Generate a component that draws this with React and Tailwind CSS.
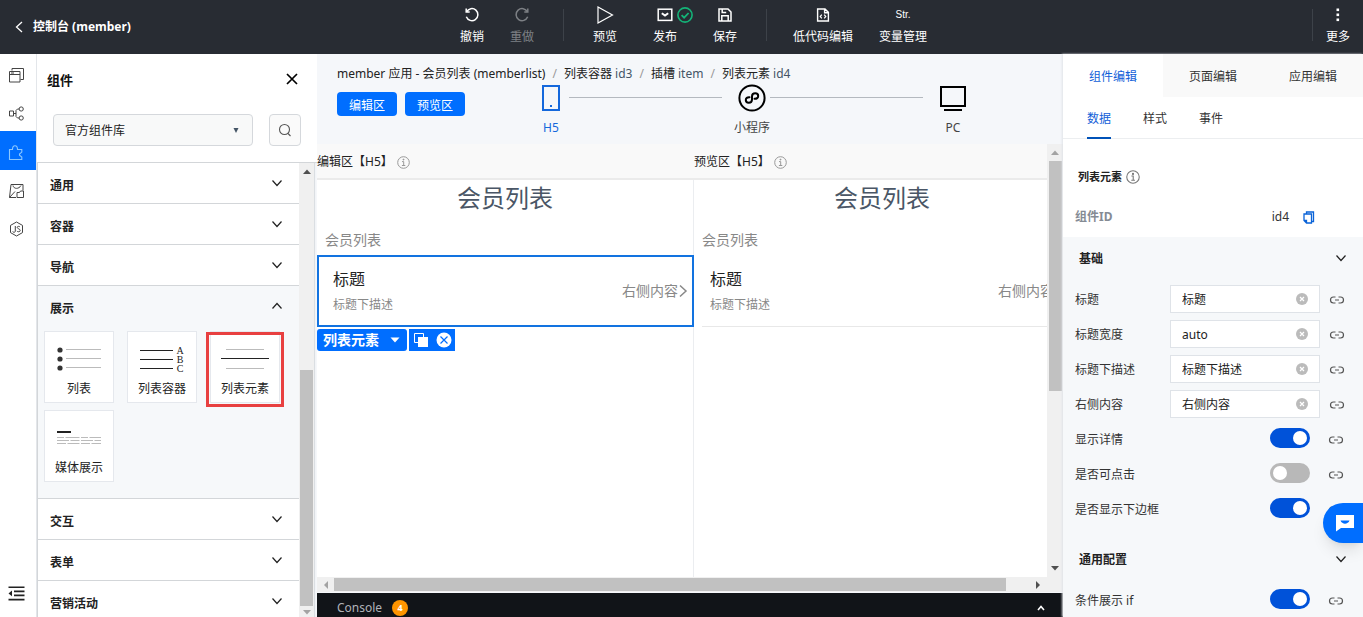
import React, { useState } from "react";

const SECTIONS_TOP = ["通用", "容器", "导航"];
const SECTIONS_BOTTOM = ["交互", "表单", "营销活动"];

const svgProps = { fill: "none", stroke: "currentColor", xmlns: "http://www.w3.org/2000/svg" };

// --- Icons ---
const Chevron = ({ up = false }) => (
  <svg {...svgProps} width="12" height="8" viewBox="0 0 12 8" strokeWidth="1.2">
    <path d={up ? "M1.5 6.5 L6 1.5 L10.5 6.5" : "M1.5 1.5 L6 6.5 L10.5 1.5"} />
  </svg>
);

const LinkIcon = () => (
  <svg {...svgProps} width="16" height="10" viewBox="0 0 16 10" strokeWidth="1.2">
    <path d="M6.5 2H4.5a3 3 0 0 0 0 6h2M9.5 2h2a3 3 0 0 1 0 6h-2M6 5h4" />
  </svg>
);

const InfoIcon = ({ size = 13 }) => (
  <svg {...svgProps} width={size} height={size} viewBox="0 0 13 13">
    <circle cx="6.5" cy="6.5" r="5.8" />
    <path d="M5 5.6h1.7v3.6M4.9 9.5h3.4" />
    <circle cx="6.5" cy="3.6" r="0.5" fill="currentColor" />
  </svg>
);

const Triangle = ({ dir }) => {
  const d = {
    up: "M0 6 L4 1.5 L8 6Z",
    down: "M0 2 L4 6.5 L8 2Z",
    left: "M6 0 L2 4 L6 8Z",
    right: "M2 0 L6 4 L2 8Z",
  }[dir];
  return (
    <svg width="8" height="8" viewBox="0 0 8 8" fill="currentColor">
      <path d={d} />
    </svg>
  );
};

const UndoIcon = ({ flip = false }) => (
  <svg {...svgProps} width="16" height="16" viewBox="0 0 16 16" strokeWidth="1.5">
    <g transform={flip ? "translate(16 0) scale(-1 1)" : undefined}>
      <path d="M2.200 1.500v3.500h3.500" />
      <path d="M2.600 4.800A6 6 0 1 1 2.300 9.800" />
    </g>
  </svg>
);

const PlayIcon = () => (
  <svg {...svgProps} width="18" height="18" viewBox="0 0 18 18" strokeWidth="1.2">
    <path d="M2 1 L16.5 9 L2 17Z" />
  </svg>
);

const PublishIcon = () => (
  <svg {...svgProps} width="16" height="14" viewBox="0 0 16 14" strokeWidth="1.5">
    <rect x="1.2" y="1.2" width="13.6" height="11.2" />
    <path d="M4.8 5.2 8 7.6l3.2-2.4" strokeWidth="2" />
  </svg>
);

const PublishedBadge = () => (
  <svg {...svgProps} width="16" height="16" viewBox="0 0 16 16" strokeWidth="1.6">
    <circle cx="8" cy="8" r="7.1" />
    <path d="M4.6 8.2 7.1 10.7 11.6 6" strokeWidth="1.8" />
  </svg>
);

const SaveIcon = () => (
  <svg {...svgProps} width="14" height="14" viewBox="0 0 14 14" strokeWidth="1.5">
    <path d="M1 1h9l3 3v9H1zM3.8 13V7.8h6.4V13M4.2 1v3.6h4" />
  </svg>
);

const CodeIcon = () => (
  <svg {...svgProps} width="14" height="14" viewBox="0 0 14 14" strokeWidth="1.4">
    <path d="M1.6 1h7.4l3.4 3.4V13H1.6zM8.6 1v3.8h3.8" />
    <path d="M5.8 6.6 4.2 8.5l1.6 1.9M8.2 6.6l1.6 1.9-1.6 1.9" strokeWidth="1.2" />
  </svg>
);

const MoreIcon = () => (
  <svg width="4" height="14" viewBox="0 0 4 14" fill="currentColor">
    <rect x="0.5" y="0.5" width="2.6" height="2.6" />
    <rect x="0.5" y="5.5" width="2.6" height="2.6" />
    <rect x="0.5" y="10.5" width="2.6" height="2.6" />
  </svg>
);

const PagesIcon = () => (
  <svg {...svgProps} width="17" height="17" viewBox="0 0 17 17">
    <path d="M4 3.5V1.5h11.5v11H12.5M1.5 4.5h10.5v10.5H1.5zM1.5 7.5h10.5M3 6h3" />
  </svg>
);

const FlowIcon = () => (
  <svg {...svgProps} width="17" height="15" viewBox="0 0 17 15">
    <path d="M1.5 5h4v5h-4zM5.5 7.5H8M11 3H9.5L8 4.5v6L9.5 12H11" />
    <circle cx="13.2" cy="3" r="2.1" />
    <circle cx="13.2" cy="12" r="2.1" />
  </svg>
);

const PuzzleIcon = () => (
  <svg {...svgProps} width="16" height="17" viewBox="0 0 16 17" stroke="#8cc8ff" strokeWidth="1.1">
    <path d="M1.500 5.500h3c0-2.300.9-3.700 2.500-3.700s2.500 1.400 2.500 3.700h4.300v2.600l-2.300 1.900v1.200l2.300 1.800v2.500h-12.300z" />
  </svg>
);

const DataIcon = () => (
  <svg {...svgProps} width="17" height="16" viewBox="0 0 17 16">
    <path d="M8 14.500H1.500L3 1.500h12v6M1.500 14.500 7 8.500M5 2.500c.6 3.800 6 3.800 8 0M9 9.500h2.500l1-1.500h3v6.500H9z" />
  </svg>
);

const JsIcon = () => (
  <svg {...svgProps} width="15" height="16" viewBox="0 0 15 16">
    <path d="M7.500 1 13.500 4.400v7.200L7.500 15 1.500 11.600V4.400z" />
    <path d="M6.300 5v5c0 1-.6 1.300-1.300 1.300s-1.100-.3-1.300-.8M11 6c-.4-.8-2.800-1-2.800.4S11.200 7.800 11.200 9.500 8.200 11 7.900 9.900" />
  </svg>
);

const CollapseIcon = () => (
  <svg {...svgProps} width="17" height="15" viewBox="0 0 17 15" strokeWidth="1.6">
    <path d="M.5 1.200h16M6 5.400h10.500M6 9.400h10.500M.5 13.600h16" />
    <path d="M4 4.600v5.600L.5 7.400z" fill="currentColor" stroke="none" />
  </svg>
);

const PhoneIcon = () => (
  <svg {...svgProps} width="18" height="26" viewBox="0 0 18 26">
    <path d="M1 1h16v24H1z" strokeWidth="2" />
    <path d="M8 20h2v2H8z" fill="currentColor" stroke="none" />
  </svg>
);

const MiniProgramIcon = () => (
  <svg {...svgProps} width="28" height="28" viewBox="0 0 28 28" strokeWidth="2">
    <circle cx="14" cy="14" r="12.600" />
    <path d="M11.500 13.200c-2.200-.2-3.700 1-3.700 2.900 0 1.500 1.200 2.700 2.900 2.700 1.900 0 3.300-1.400 3.300-3.200v-3.200c0-1.800 1.400-3.200 3.300-3.200 1.700 0 2.900 1.200 2.900 2.700 0 1.900-1.500 3.100-3.700 2.900" strokeLinecap="round" />
  </svg>
);

const DesktopIcon = () => (
  <svg {...svgProps} width="26" height="26" viewBox="0 0 26 26" strokeWidth="2">
    <path d="M1 2h24v19H1zM4 25h18" />
  </svg>
);

const ListGlyph = () => (
  <svg width="46" height="26" viewBox="0 0 46 26">
    <g fill="#333">
      <circle cx="4" cy="4" r="2.600" />
      <circle cx="4" cy="13" r="2.600" />
      <circle cx="4" cy="22" r="2.600" />
    </g>
    <path d="M10 3.500h35M10 12.500h35M10 21.500h35" stroke="#bbb" />
  </svg>
);

const ListContainerGlyph = () => (
  <svg width="46" height="28" viewBox="0 0 46 28">
    <path d="M1 4.500h33M1 13.500h33M1 22.500h33" stroke="#222" />
    <g fontFamily="Liberation Serif, serif" fontSize="10" fill="#222" textAnchor="middle">
      <text x="41" y="8">A</text>
      <text x="41" y="17">B</text>
      <text x="41" y="26">C</text>
    </g>
  </svg>
);

const ListItemGlyph = () => (
  <svg width="48" height="26" viewBox="0 0 48 26">
    <path d="M5 3.500h38M5 22.500h38" stroke="#bbb" />
    <path d="M0 12.500h48" stroke="#222" />
  </svg>
);

const MediaGlyph = () => (
  <svg width="46" height="26" viewBox="0 0 46 26">
    <path d="M1 7h14" stroke="#222" strokeWidth="2" />
    <path d="M1 12.500h44" stroke="#bbb" strokeDasharray="7 1.500 14 1.500" />
    <path d="M1 15.500h44" stroke="#bbb" strokeDasharray="12 1.500 9 1.500" />
    <path d="M1 18.500h44" stroke="#bbb" strokeDasharray="9 1.500 12 1.500" />
  </svg>
);

const ScrollThumb = ({ className }) => <div className={`bg-[#c1c1c1] ${className}`} />;

// --- Top bar ---
function TopButton({ label, children, className = "w-[60px]" }) {
  return (
    <button className={`flex flex-col items-center ${className}`}>
      <span className="relative flex h-5 items-center justify-center">{children}</span>
      <span className="mt-1 text-xs leading-4">{label}</span>
    </button>
  );
}

const TopDivider = ({ className }) => <div className={`h-8 w-px bg-[#3d4249] ${className}`} />;

function TopBar() {
  return (
    <header className="flex h-[54px] shrink-0 items-center bg-[#282c33] pb-1 text-white">
      <div className="flex flex-1 items-center pl-[15px] pt-1">
        <button className="flex items-center gap-[10px] text-xs font-bold leading-4">
          <svg {...svgProps} width="8" height="12" viewBox="0 0 8 12" strokeWidth="1.300">
            <path d="M7 1 1.500 6 7 11" />
          </svg>
          控制台 (member)
        </button>
      </div>
      <nav className="flex items-center pl-3">
        <TopButton label="撤销" className="w-[50px]"><UndoIcon /></TopButton>
        <TopButton label="重做" className="w-[50px] text-[#7d8085]"><UndoIcon flip /></TopButton>
        <TopDivider className="ml-4 mr-[11px]" />
        <TopButton label="预览"><PlayIcon /></TopButton>
        <TopButton label="发布">
          <PublishIcon />
          <span className="absolute left-5 text-[#14b478]"><PublishedBadge /></span>
        </TopButton>
        <TopButton label="保存"><SaveIcon /></TopButton>
        <TopDivider className="ml-[11px] mr-4" />
        <TopButton label="低代码编辑" className="w-20"><CodeIcon /></TopButton>
        <TopButton label="变量管理" className="w-20">
          <span className="font-['Liberation_Sans'] text-[10px] leading-4">Str.</span>
        </TopButton>
      </nav>
      <div className="flex flex-1 items-center justify-end">
        <TopDivider className="" />
        <TopButton label="更多" className="w-[50px]"><MoreIcon /></TopButton>
      </div>
    </header>
  );
}

// --- Left rail ---
function Rail() {
  return (
    <aside className="flex w-[37px] shrink-0 flex-col items-stretch border-r border-[#e3e6ea] bg-white pt-px text-[#444]">
      <button aria-label="页面" className="flex h-[38px] items-center justify-center pr-1 pt-[3px]"><PagesIcon /></button>
      <button aria-label="流程" className="flex h-[38px] items-center justify-center pr-1 pt-[3px]"><FlowIcon /></button>
      <button aria-label="组件" className="flex h-[39px] items-center justify-center bg-[#006eff] pr-1 pt-[3px]"><PuzzleIcon /></button>
      <button aria-label="素材" className="flex h-[38px] items-center justify-center pr-1 pt-[3px]"><DataIcon /></button>
      <button aria-label="低代码" className="flex h-[39px] items-center justify-center pr-1 pt-[3px]"><JsIcon /></button>
      <button aria-label="收起" className="mb-4 mt-auto flex justify-center pr-[3px] text-[#222]"><CollapseIcon /></button>
    </aside>
  );
}

// --- Component library ---
function SectionHeader({ title, open = false }) {
  return (
    <button className="flex h-10 w-full items-center justify-between pl-3 pr-4 text-xs font-bold leading-4 text-[#222]">
      <span className="pt-[6px]">{title}</span>
      <Chevron up={open} />
    </button>
  );
}

function ComponentCard({ label, marked = false, children }) {
  return (
    <button className="relative flex h-[72px] flex-col items-center justify-between border border-[#e5e8ed] bg-white pb-[5px] pt-[14px] text-[#222]">
      {children}
      <span className="text-xs leading-4">{label}</span>
      {marked && <span className="absolute -bottom-[5px] -left-[5px] -right-[5px] top-0 border-[3px] border-[#e84040]" />}
    </button>
  );
}

function ComponentPanel() {
  return (
    <section className="flex w-[280px] shrink-0 flex-col bg-white">
      <div className="flex h-[108px] shrink-0 flex-col pr-4">
        <div className="flex h-[50px] items-center justify-between pl-[10px]">
          <h2 className="pt-[2px] text-[13px] font-bold leading-5 text-[#111]">组件</h2>
          <button aria-label="关闭" className="pr-[3px]">
            <svg {...svgProps} width="12" height="12" viewBox="0 0 12 12" strokeWidth="1.700">
              <path d="M1 1 11 11M11 1 1 11" />
            </svg>
          </button>
        </div>
        <div className="flex justify-between pl-4 pt-[10px]">
          <div className="relative h-8 w-[200px]">
            <select aria-label="组件库" className="h-full w-full appearance-none rounded-sm border border-[#d5d8dc] bg-[#f8f9f9] px-[11px] pt-[2px] text-xs text-[#222]">
              <option>官方组件库</option>
            </select>
            <span className="pointer-events-none absolute right-[13px] top-3 text-[#456]">
              <svg width="8" height="8" viewBox="0 0 8 8" fill="currentColor"><path d="M1.500 2h5L4 7z" /></svg>
            </span>
          </div>
          <button aria-label="搜索" className="flex h-8 w-8 items-center justify-center rounded-sm border border-[#d5d8dc] bg-[#fafafa] text-[#555]">
            <svg {...svgProps} width="14" height="14" viewBox="0 0 14 14" strokeWidth="1.100">
              <circle cx="6.500" cy="6.500" r="5" />
              <path d="M10 10.500 12.500 13" />
            </svg>
          </button>
        </div>
      </div>
      <div className="flex min-h-0 flex-1 border-t border-[#d3d6d9]">
        <div className="min-w-0 flex-1 overflow-hidden border-l border-[#d3d6d9]">
          {SECTIONS_TOP.map((title) => (
            <div key={title} className="border-b border-[#d3d6d9]"><SectionHeader title={title} /></div>
          ))}
          <div className="border-b border-[#d3d6d9] bg-[#f6f8fa] pb-4">
            <SectionHeader title="展示" open />
            <div className="grid grid-cols-[repeat(3,70px)] gap-x-[13px] gap-y-[7px] pl-[6px] pt-[5px]">
              <ComponentCard label="列表"><ListGlyph /></ComponentCard>
              <ComponentCard label="列表容器"><ListContainerGlyph /></ComponentCard>
              <ComponentCard label="列表元素" marked><ListItemGlyph /></ComponentCard>
              <ComponentCard label="媒体展示"><MediaGlyph /></ComponentCard>
            </div>
          </div>
          {SECTIONS_BOTTOM.map((title) => (
            <div key={title} className="border-b border-[#d3d6d9]"><SectionHeader title={title} /></div>
          ))}
        </div>
        <div className="flex w-[15px] flex-col items-center bg-[#f0f0f0] text-[#505050]">
          <div className="flex h-[17px] items-center"><Triangle dir="up" /></div>
          <div className="flex-1" />
          <ScrollThumb className="h-[236px] w-[13px]" />
          <div className="flex h-[11px] items-center text-[#a3a3a3]"><Triangle dir="down" /></div>
        </div>
        <div className="w-[3px] bg-[#f5f7fa] shadow-[inset_1px_0_1px_#d8dbdf]" />
      </div>
    </section>
  );
}

// --- Canvas ---
function PhonePage({ title, selected = false }) {
  return (
    <div className="flex w-[377px] shrink-0 flex-col">
      <div className="flex h-[36px] shrink-0 items-center gap-1 border-b-2 border-[#ebebeb] bg-[#f9f9f9] pt-[2px] text-xs leading-4 text-[#222]">
        {title}
        <span className="text-[#999]"><InfoIcon /></span>
      </div>
      <div className="min-h-0 flex-1 border-r border-[#ebedf0] bg-white">
        <h1 className="pt-[2px] text-center text-2xl leading-8 text-[#4a5666]">会员列表</h1>
        <p className="px-2 pb-[5px] pt-4 text-sm leading-5 text-[#888]">会员列表</p>
        <div className={selected ? "-mr-px border-2 border-[#1273e0]" : "ml-2 border-b border-[#e8e8e8]"}>
          <div className={selected ? "flex h-[68px] items-center justify-between pl-[14px] pr-1" : "flex h-[71px] items-center justify-between pl-2 pr-[6px]"}>
            <div>
              <div className="text-base leading-6 text-[#222]">标题</div>
              <div className="mt-1 text-xs leading-5 text-[#888]">标题下描述</div>
            </div>
            <div className="flex items-center text-sm leading-5 text-[#888]">
              右侧内容
              <svg {...svgProps} width="10" height="14" viewBox="0 0 10 14" strokeWidth="1.500">
                <path d="M2 1.500 8 7 2 12.500" />
              </svg>
            </div>
          </div>
        </div>
        {selected && (
          <div className="flex gap-[2px] pt-[2px] text-white">
            <button className="flex h-[22px] w-[90px] items-center justify-between rounded-[3px] bg-[#006eff] pl-[6px] pr-[7px] text-sm font-bold leading-5">
              列表元素
              <svg width="10" height="6" viewBox="0 0 10 6" fill="currentColor"><path d="M.5.500h9L5 5.500z" /></svg>
            </button>
            <div className="flex h-[22px] w-[46px] items-center justify-between bg-[#006eff] pl-1 pr-[3px]">
              <button aria-label="复制">
                <svg width="16" height="16" viewBox="0 0 16 16">
                  <path d="M1.500 1.500h9v9h-9z" fill="none" stroke="#fff" />
                  <path d="M5 5h10v10H5z" fill="#fff" />
                </svg>
              </button>
              <button aria-label="删除">
                <svg width="16" height="16" viewBox="0 0 16 16">
                  <circle cx="8" cy="8" r="7.500" fill="#fff" />
                  <path d="M4.500 4.500 11.500 11.500M11.500 4.500 4.500 11.500" stroke="#006eff" strokeWidth="1.200" />
                </svg>
              </button>
            </div>
          </div>
        )}
      </div>
    </div>
  );
}

const Step = ({ label, active = false, children }) => (
  <button className={`flex w-9 flex-col items-center text-xs leading-4 ${active ? "text-[#1468dc]" : "text-black"}`}>
    <span className="flex h-7 items-center">{children}</span>
    <span className={active ? "mt-2" : "mt-2 text-[#444]"}>{label}</span>
  </button>
);

function Workspace() {
  const crumbs = [["列表容器", "id3"], ["插槽", "item"], ["列表元素", "id4"]];
  return (
    <main className="flex min-w-0 flex-1 flex-col bg-[#f5f7fa]">
      <div className="h-[90px] shrink-0 pl-5 pt-[11px]">
        <nav className="flex whitespace-nowrap text-xs leading-[18px] text-[#222]">
          <a href="#page">member 应用 - 会员列表 (memberlist)</a>
          {crumbs.map(([name, id]) => (
            <span key={id} className="flex">
              <span className="px-[7px] text-[#999]">/</span>
              <a href={`#${id}`}>{name} <span className="text-[#456]">{id}</span></a>
            </span>
          ))}
        </nav>
        <div className="flex items-start">
          <div className="flex gap-2 pt-[9px] text-xs text-white">
            <button className="h-6 w-[60px] rounded-sm bg-[#006eff] pt-1">编辑区</button>
            <button className="h-6 w-[60px] rounded-sm bg-[#006eff] pt-1">预览区</button>
          </div>
          <div className="ml-[68px] mr-[92px] flex flex-1 items-start pt-px">
            <Step label="H5" active><PhoneIcon /></Step>
            <div className="mr-3 mt-[13px] h-px flex-1 bg-[#b4b9bf]" />
            <Step label="小程序"><MiniProgramIcon /></Step>
            <div className="mr-3 mt-[13px] h-px flex-1 bg-[#b4b9bf]" />
            <Step label="PC"><DesktopIcon /></Step>
          </div>
        </div>
      </div>
      <div className="flex min-h-0 flex-1">
        <div className="flex min-w-0 flex-1 flex-col">
          <div className="flex min-h-0 flex-1 overflow-hidden bg-white">
            <PhonePage title="编辑区【H5】" selected />
            <PhonePage title="预览区【H5】" />
          </div>
          <div className="flex h-[15px] items-center bg-[#f0f0f0] text-[#505050]">
            <span className="flex w-[17px] justify-center text-[#a3a3a3]"><Triangle dir="left" /></span>
            <ScrollThumb className="h-[13px] w-[92%]" />
            <span className="ml-auto mr-[5px]"><Triangle dir="right" /></span>
          </div>
        </div>
        <div className="flex w-4 flex-col items-center bg-[#f0f0f0] text-[#505050]">
          <div className="flex h-[17px] items-center text-[#a3a3a3]"><Triangle dir="up" /></div>
          <ScrollThumb className="h-[230px] w-[13px]" />
          <div className="mb-5 mt-auto"><Triangle dir="down" /></div>
        </div>
      </div>
      <button className="mt-px flex h-6 shrink-0 items-center bg-[#111418] pl-5 pr-[18px] pt-[6px] text-xs leading-4 text-[#b0b3b8]">
        Console
        <span className="ml-[10px] flex h-4 w-4 items-center justify-center rounded-full bg-[#ff9500] text-[9px] font-bold text-white">4</span>
        <svg {...svgProps} width="8" height="6" viewBox="0 0 8 6" strokeWidth="1.600" className="ml-auto text-white">
          <path d="M1 5 4 1.500 7 5" />
        </svg>
      </button>
    </main>
  );
}

// --- Properties ---
function TextField({ id, label, defaultValue }) {
  const [value, setValue] = useState(defaultValue);
  return (
    <div className="flex h-[35px] items-center pl-3 pr-[18px] text-xs leading-4">
      <label htmlFor={id} className="flex-1 pt-[2px]">{label}</label>
      <div className="relative">
        <input id={id} value={value} onChange={(e) => setValue(e.target.value)} className="h-7 w-[150px] border border-[#dfe3e8] bg-white pl-[11px] pr-7 pt-px text-[#222]" />
        <button aria-label={`清空${label}`} onClick={() => setValue("")} className="absolute right-3 top-2">
          <svg width="12" height="12" viewBox="0 0 12 12">
            <circle cx="6" cy="6" r="6" fill="#bbb" />
            <path d="M4 4 8 8M8 4 4 8" stroke="#fff" strokeWidth="1.200" />
          </svg>
        </button>
      </div>
      <button aria-label={`绑定${label}`} className="ml-[9px] pt-[2px] text-[#555]"><LinkIcon /></button>
    </div>
  );
}

function SwitchField({ id, label, on = false }) {
  return (
    <div className="flex h-[35px] items-center pl-3 pr-[19px] text-xs leading-4">
      <label htmlFor={id} className="flex-1 pt-[2px]">{label}</label>
      <input
        id={id}
        type="checkbox"
        defaultChecked={on}
        className="mb-[2px] h-5 w-10 appearance-none rounded-full bg-[#b8b8b8] p-[3px] before:block before:h-[14px] before:w-[14px] before:rounded-full before:bg-white checked:bg-[#0052d9] checked:before:ml-5"
      />
      <button aria-label={`绑定${label}`} className="ml-[18px] pt-[2px] text-[#555]"><LinkIcon /></button>
    </div>
  );
}

const GroupHeader = ({ title }) => (
  <button className="flex h-11 w-full items-center justify-between pb-[2px] pl-4 pr-4 text-xs font-bold leading-4 text-[#222]">
    <span className="pt-[2px]">{title}</span>
    <Chevron />
  </button>
);

function PropertyPanel() {
  return (
    <aside className="flex w-[300px] shrink-0 flex-col overflow-hidden bg-white text-[#333] shadow-[-1px_0_2px_#e0e3e8]">
      <nav className="flex h-[43px] shrink-0 text-xs leading-4">
        <button className="flex-1 bg-white pt-[2px] text-[#1260d8]">组件编辑</button>
        <button className="flex-1 bg-[#f9f9f9] pt-[2px]">页面编辑</button>
        <button className="flex-1 bg-[#f9f9f9] pt-[2px]">应用编辑</button>
      </nav>
      <nav className="flex h-[42px] shrink-0 gap-8 border-b border-[#eceef0] px-6 text-xs leading-4">
        <button className="-mb-px border-b-2 border-[#0052b8] pt-[3px] text-[#1260d8]">数据</button>
        <button className="pt-[2px]">样式</button>
        <button className="pt-[2px]">事件</button>
      </nav>
      <div className="flex h-[98px] shrink-0 flex-col pt-[30px] leading-4">
        <div className="flex items-center gap-1 pl-[15px] text-[11px] font-bold text-[#222]">
          列表元素 <span className="text-[#777]"><InfoIcon size={14} /></span>
        </div>
        <div className="mt-6 flex items-center pl-3 pr-12 text-xs">
          <span className="flex-1 font-bold text-[#858b94]">组件ID</span>
          id4
          <button aria-label="复制组件ID" className="ml-[14px] text-[#0a63d8]">
            <svg {...svgProps} width="12" height="13" viewBox="0 0 12 13" strokeWidth="1.300">
              <path d="M3.500 2.800V1h7v9.500H9M1 3h7.500v9H3.500L1 9.500zM1 9.500h2.500V12" />
            </svg>
          </button>
        </div>
      </div>
      <div className="flex-1 bg-[#f6f8fa]">
        <GroupHeader title="基础" />
        <TextField id="title" label="标题" defaultValue="标题" />
        <TextField id="title-width" label="标题宽度" defaultValue="auto" />
        <TextField id="desc" label="标题下描述" defaultValue="标题下描述" />
        <TextField id="extra" label="右侧内容" defaultValue="右侧内容" />
        <SwitchField id="detail" label="显示详情" on />
        <SwitchField id="clickable" label="是否可点击" />
        <SwitchField id="border" label="是否显示下边框" on />
        <div className="pt-3"><GroupHeader title="通用配置" /></div>
        <SwitchField id="if" label="条件展示 if" on />
      </div>
    </aside>
  );
}

export default function App() {
  return (
    <div className="relative flex h-screen flex-col overflow-hidden font-['Noto_Sans','Noto_Sans_CJK_SC',sans-serif]">
      <TopBar />
      <div className="flex min-h-0 flex-1">
        <Rail />
        <ComponentPanel />
        <Workspace />
        <PropertyPanel />
      </div>
      <button aria-label="客服" className="absolute bottom-[74px] right-0 flex h-10 w-10 items-center rounded-l-full bg-[#006eff] pl-[13px] shadow-lg">
        <svg width="18" height="18" viewBox="0 0 18 18">
          <path d="M0 1h18v13H5l-5 3.500z" fill="#fff" />
          <path d="M4.500 6.500h9c-1.500 4.200-7.500 4.200-9 0z" fill="#006eff" />
        </svg>
      </button>
    </div>
  );
}
